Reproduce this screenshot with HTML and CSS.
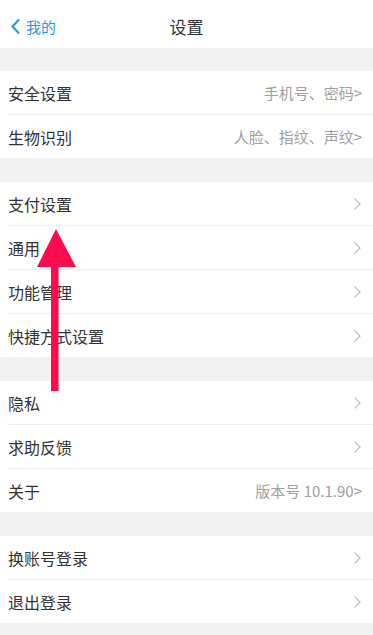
FILE: index.html
```html
<!DOCTYPE html>
<html lang="zh-CN">
<head>
    <meta charset="UTF-8">
    <meta name="viewport" content="width=device-width, initial-scale=1.0">
    <title>设置</title>
    <link rel="stylesheet" href="styles.css">
</head>
<body>
    <div class="nav">
        <a class="back">
            <svg width="11" height="17" viewBox="0 0 11 17"><path d="M9 1.5 L2.5 8.5 L9 15.5" fill="none" stroke="#1e9be0" stroke-width="2"/></svg>
            <span>我的</span>
        </a>
        <div class="title">设置</div>
    </div>

    <div class="group first">
        <div class="row"><span class="label">安全设置</span><span class="detail">手机号、密码&gt;</span></div>
        <div class="row"><span class="label">生物识别</span><span class="detail">人脸、指纹、声纹&gt;</span></div>
    </div>

    <div class="group">
        <div class="row"><span class="label">支付设置</span><span class="chev"></span></div>
        <div class="row"><span class="label">通用</span><span class="chev"></span></div>
        <div class="row"><span class="label">功能管理</span><span class="chev"></span></div>
        <div class="row"><span class="label">快捷方式设置</span><span class="chev"></span></div>
    </div>

    <div class="group">
        <div class="row"><span class="label">隐私</span><span class="chev"></span></div>
        <div class="row"><span class="label">求助反馈</span><span class="chev"></span></div>
        <div class="row"><span class="label">关于</span><span class="detail">版本号 10.1.90&gt;</span></div>
    </div>

    <div class="group">
        <div class="row"><span class="label">换账号登录</span><span class="chev"></span></div>
        <div class="row"><span class="label">退出登录</span><span class="chev"></span></div>
    </div>

    <!-- annotation arrow drawn over the list -->
    <svg class="arrow" width="42" height="164" viewBox="0 0 42 164">
        <polygon points="19,0 39,38 0,38" fill="#ff0a4c"/>
        <rect x="14" y="36" width="7.5" height="126" fill="#ff0a4c"/>
    </svg>
</body>
</html>
```

FILE: styles.css
```css
body {
    margin: 0;
    background: #f2f2f2;
    font-family: "Noto Sans CJK SC", "Liberation Sans", sans-serif;
    color: #333;
    position: relative;
    height: 635px;
    overflow: hidden;
}
.nav {
    height: 48px;
    background: #fff;
    position: relative;
    display: flex;
    align-items: center;
}
.back {
    display: flex;
    align-items: center;
    gap: 5px;
    padding-left: 10px;
    color: #1e9be0;
    font-size: 15px;
    padding-top: 4px;
}
.title {
    position: absolute;
    left: 0;
    right: 0;
    top: 14px;
    text-align: center;
    font-size: 17px;
    color: #333;
    pointer-events: none;
}
.group {
    background: #fff;
    margin-top: 24px;
}
.group.first { margin-top: 23px; }
.row {
    height: 44px;
    margin-left: 7px;
    padding-left: 1px;
    padding-right: 11px;
    display: flex;
    align-items: center;
    justify-content: space-between;
    border-bottom: 1px solid #efefef;
    box-sizing: border-box;
}
.row:last-child { border-bottom: none; height: 43px; }
.label {
    font-size: 16px;
    color: #333;
}
.detail {
    font-size: 15px;
    color: #a0a0a0;
}
.chev {
    width: 7px;
    height: 7px;
    border-right: 1.5px solid #b5b5b5;
    border-top: 1.5px solid #b5b5b5;
    transform: rotate(45deg);
    margin-right: 3px;
}
.arrow {
    position: absolute;
    left: 37px;
    top: 229px;
}
```
